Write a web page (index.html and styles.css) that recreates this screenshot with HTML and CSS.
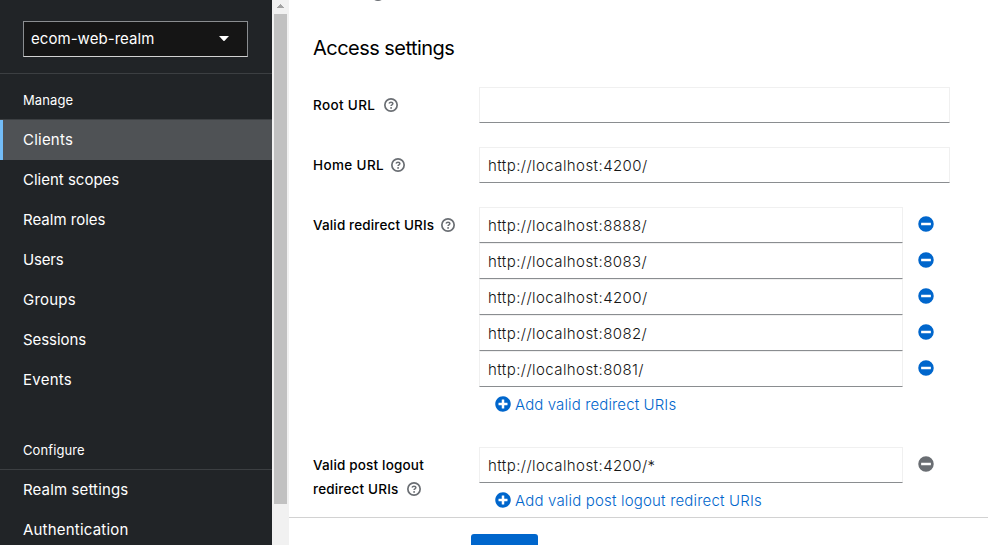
FILE: index.html
```html
<!DOCTYPE html>
<html lang="en">
<head>
<meta charset="utf-8">
<title>Client settings</title>
<link rel="stylesheet" href="styles.css">
</head>
<body>
<svg class="defs" width="0" height="0" aria-hidden="true">
  <symbol id="help" viewBox="0 0 14 14"><circle cx="7" cy="7" r="6.150" fill="none" stroke="#6a6e73" stroke-width="1.700"/><path d="M5 5.500Q5.500 4.200 7 4.200q1.900 0 1.900 1.400 0 .8-.9 1.250Q7.100 7.300 7.100 8.100" fill="none" stroke="#6a6e73" stroke-width="1.500"/><circle cx="7.100" cy="9.900" r=".95"/></symbol>
  <symbol id="minus" viewBox="0 0 512 512"><path fill-rule="evenodd" d="M256 8a248 248 0 1 1 0 496 248 248 0 0 1 0-496zM112 296c-6.600 0-12-5.400-12-12v-56c0-6.600 5.400-12 12-12h288c6.600 0 12 5.400 12 12v56c0 6.600-5.400 12-12 12z"/></symbol>
  <symbol id="plus" viewBox="0 0 512 512"><path d="M256 8C119 8 8 119 8 256s111 248 248 248 248-111 248-248S393 8 256 8zm144 276c0 6.600-5.400 12-12 12h-92v92c0 6.600-5.400 12-12 12h-56c-6.600 0-12-5.400-12-12v-92h-92c-6.600 0-12-5.400-12-12v-56c0-6.600 5.400-12 12-12h92v-92c0-6.600 5.400-12 12-12h56c6.600 0 12 5.400 12 12v92h92c6.600 0 12 5.400 12 12z"/></symbol>
</svg>
<div class="app">
  <nav class="sidebar">
    <div class="realm"><button class="realm-select"><span>ecom-web-realm</span><svg width="10" height="5" viewBox="0 0 10 5"><path d="M0 0h10L5.600 4.700q-.6.500-1.200 0z" fill="#fff"/></svg></button></div>
    <section class="nav-group">
      <h2>Manage</h2>
      <a class="item active"><span class="n-clients">Clients</span></a>
      <a class="item"><span>Client scopes</span></a>
      <a class="item"><span>Realm roles</span></a>
      <a class="item"><span class="n-users">Users</span></a>
      <a class="item"><span class="n-groups">Groups</span></a>
      <a class="item"><span class="n-sessions">Sessions</span></a>
      <a class="item"><span class="n-events">Events</span></a>
    </section>
    <section class="nav-group configure">
      <h2>Configure</h2>
      <a class="item"><span class="n-settings">Realm settings</span></a>
      <a class="item"><span class="n-auth">Authentication</span></a>
    </section>
  </nav>
  <div class="scrollbar"><svg width="7" height="4" viewBox="0 0 7 4"><path d="M3 0h1v1h1v1h1v1h1v1H0V3h1V2h1V1h1z" fill="#a3a3a3"/></svg><div class="thumb"></div></div>
  <main>
    <div class="form">
      <svg class="help previous"><use href="#help"/></svg>
      <h1>Access settings</h1>
      <div class="row">
        <div class="label"><span class="l-url">Root URL</span><svg class="help"><use href="#help"/></svg></div>
        <div class="input"></div>
      </div>
      <div class="row">
        <div class="label"><span class="l-url">Home URL</span><svg class="help near"><use href="#help"/></svg></div>
        <div class="input">http://localhost:4200/</div>
      </div>
      <div class="row">
        <div class="label"><span>Valid redirect URIs</span><svg class="help near"><use href="#help"/></svg></div>
        <div class="list">
          <div class="entry"><div class="input">http://localhost:8888/</div><svg class="icon"><use href="#minus"/></svg></div>
          <div class="entry"><div class="input">http://localhost:8083/</div><svg class="icon"><use href="#minus"/></svg></div>
          <div class="entry"><div class="input">http://localhost:4200/</div><svg class="icon"><use href="#minus"/></svg></div>
          <div class="entry"><div class="input">http://localhost:8082/</div><svg class="icon"><use href="#minus"/></svg></div>
          <div class="entry"><div class="input">http://localhost:8081/</div><svg class="icon"><use href="#minus"/></svg></div>
          <a class="add"><svg class="icon"><use href="#plus"/></svg><span>Add valid redirect URIs</span></a>
        </div>
      </div>
      <div class="row">
        <div class="label post"><div>Valid post logout</div><div class="label-end"><span>redirect URIs</span><svg class="help"><use href="#help"/></svg></div></div>
        <div class="list">
          <div class="entry"><div class="input">http://localhost:4200/*</div><svg class="icon disabled"><use href="#minus"/></svg></div>
          <a class="add add-post"><svg class="icon"><use href="#plus"/></svg><span>Add valid post logout redirect URIs</span></a>
        </div>
      </div>
    </div>
    <footer><button class="save" aria-label="Save"></button></footer>
  </main>
</div>
</body>
</html>
```
FILE: styles.css
```css
* { box-sizing: border-box; }
body { margin: 0; overflow: hidden; font-family: Inter, "Liberation Sans", sans-serif; font-size: 15px; color: #151515; background: #fff; }
h1, h2 { margin: 0; font-weight: 400; }
button { margin: 0; font: inherit; }
svg { flex: none; display: block; }
.defs { position: absolute; }
.app { display: flex; height: 545px; overflow: hidden; }

.sidebar { width: 272px; flex: none; background: #212427; color: #fff; overflow: hidden; }
.realm { height: 74px; padding: 21px 24px 0 23px; border-bottom: 1px solid #3c3f42; }
.realm-select { display: flex; align-items: center; justify-content: space-between; width: 100%; height: 36px; padding: 0 18px 2px 7px; background: #151515; color: #fff; border: 1px solid #8a8d90; border-bottom-color: #d2d2d2; letter-spacing: .05px; }
.nav-group h2 { height: 46px; padding: 14px 0 0 23px; font-size: 13px; line-height: 24px; border-bottom: 1px solid #3c3f42; letter-spacing: .1px; }
.configure { margin-top: 24px; }
.item { display: flex; align-items: center; height: 40px; padding: 0 0 2px 23px; }
.active { background: #4f5255; box-shadow: inset 3px 0 #73bcf7; }
.n-clients { letter-spacing: .22px; }
.n-users { letter-spacing: -.15px; }
.n-groups { letter-spacing: .2px; }
.n-sessions { letter-spacing: -.07px; }
.n-events { letter-spacing: .25px; }
.n-settings { letter-spacing: .13px; }
.n-auth { letter-spacing: .2px; }

.scrollbar { width: 17px; flex: none; padding-top: 4px; background: #f1f1f1; }
.scrollbar svg { margin-left: 5px; }
.thumb { width: 13px; height: 490px; margin: 6px 0 0 2px; background: #c1c1c1; }

main { flex: 1; display: flex; flex-direction: column; }
.form { height: 517px; flex: none; padding-left: 24px; overflow: hidden; display: flow-root; }
.help { width: 14px; height: 14px; fill: #6a6e73; }
.previous { margin: -13px 0 0 58px; }
h1 { height: 30px; margin: 32px 0 24px; font-size: 20px; line-height: 30px; letter-spacing: -.54px; color: #000; }
.row { display: grid; grid-template-columns: 166px 471px; margin-bottom: 24px; }
.label { display: flex; align-items: flex-end; align-self: start; padding-top: 6px; font-size: 13.5px; font-weight: 500; line-height: 24px; letter-spacing: .14px; color: #000; white-space: nowrap; }
.l-url { letter-spacing: .36px; }
.label .help { margin: 0 0 5px 8.5px; }
.label .near { margin-left: 7px; }
.post { display: block; letter-spacing: .17px; }
.label-end { display: flex; align-items: flex-end; }
.input { height: 36px; padding-left: 8px; line-height: 35px; font-weight: 300; letter-spacing: .42px; border: 1px solid #f0f0f0; border-bottom-color: #8a8d90; white-space: nowrap; }
.entry { display: flex; }
.entry .input { width: 424px; }
.icon { width: 16px; height: 16px; fill: #06c; }
.entry .icon { margin: 9px 0 0 15px; }
.icon.disabled { fill: #6a6e73; }
.add { display: flex; align-items: center; gap: 4px; height: 36px; padding: 0 0 2px 16px; color: #06c; font-weight: 300; letter-spacing: .12px; white-space: nowrap; }
.add-post { letter-spacing: .18px; }
footer { flex: 1; padding: 16px 0 0 182px; border-top: 1px solid #d2d2d2; }
.save { display: block; width: 67px; height: 36px; background: #06c; border: 0; border-radius: 3px; }
```
